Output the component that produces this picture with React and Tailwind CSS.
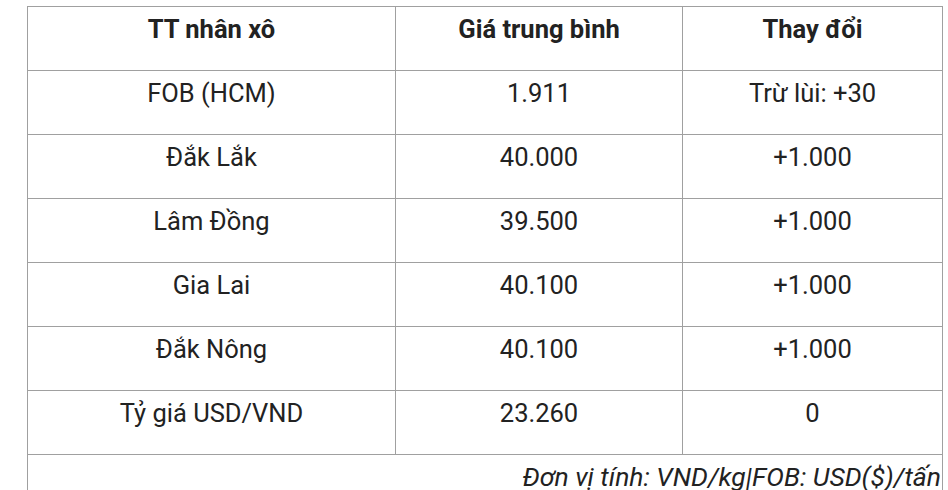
export default function App() {
  const rows = [
    ["FOB (HCM)", "1.911", "Trừ lùi: +30"],
    ["Đắk Lắk", "40.000", "+1.000"],
    ["Lâm Đồng", "39.500", "+1.000"],
    ["Gia Lai", "40.100", "+1.000"],
    ["Đắk Nông", "40.100", "+1.000"],
    ["Tỷ giá USD/VND", "23.260", "0"],
  ];
  const cell = "border border-[#a0a0a0] h-[64px] align-top text-center pt-[4px] leading-[36px]";
  return (
    <div className="w-[948px] h-[490px] overflow-hidden bg-white pt-[6px] pl-[27px] text-[#222222] text-[25.5px]" style={{ fontFamily: "Roboto, 'Noto Sans', sans-serif" }}>
      <table className="border-collapse table-fixed w-[915px]">
        <colgroup>
          <col className="w-[368px]" />
          <col className="w-[287px]" />
          <col className="w-[260px]" />
        </colgroup>
        <tbody>
          <tr>
            <td className={cell + " font-bold"}>TT nhân xô</td>
            <td className={cell + " font-bold"}>Giá trung bình</td>
            <td className={cell + " font-bold"}>Thay đổi</td>
          </tr>
          {rows.map((r, i) => (
            <tr key={i}>
              <td className={cell}>{r[0]}</td>
              <td className={cell}>{r[1]}</td>
              <td className={cell}>{r[2]}</td>
            </tr>
          ))}
          <tr>
            <td colSpan={3} className="border border-[#a0a0a0] h-[64px] align-top text-right italic pt-[4px] pr-[1px] leading-[36px] text-[26.5px] whitespace-nowrap">
              Đơn vị tính: VND/kg|FOB: USD($)/tấn
            </td>
          </tr>
        </tbody>
      </table>
    </div>
  );
}
